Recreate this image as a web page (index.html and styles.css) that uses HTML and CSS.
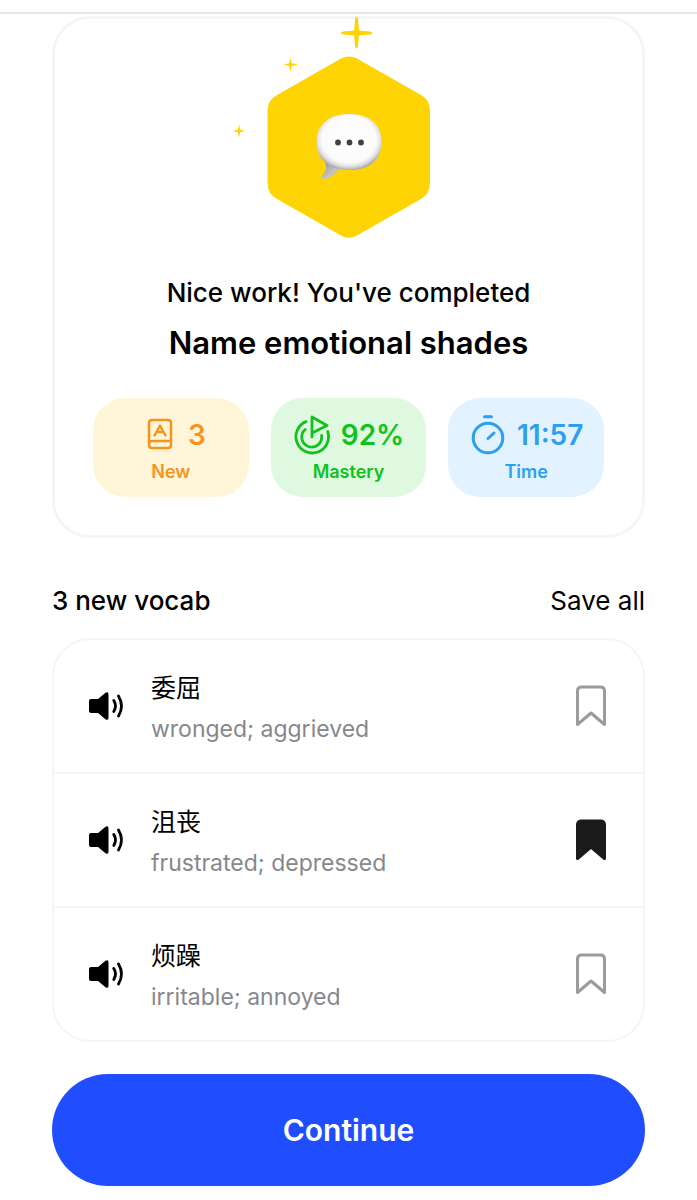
FILE: index.html
```html
<!DOCTYPE html>
<html lang="en">

<head>
    <meta charset="UTF-8">
    <meta name="viewport" content="width=device-width, initial-scale=1.0">
    <title>Lesson complete</title>
    <link rel="stylesheet" href="styles.css">
</head>

<body>
    <header class="top-bar"></header>
    <main class="page">
        <section class="summary">
            <!-- badge with sparkles -->
            <svg class="badge" viewBox="229 19 240 219" aria-hidden="true">
                <defs>
                    <radialGradient id="bubble" cx="50%" cy="45%" r="56%">
                        <stop offset="0" stop-color="#ffffff" />
                        <stop offset="0.75" stop-color="#fbfbfc" />
                        <stop offset="0.88" stop-color="#dedee0" />
                        <stop offset="1" stop-color="#a5a4a4" />
                    </radialGradient>
                    <linearGradient id="tail" x1="0" y1="0" x2="1" y2="1">
                        <stop offset="0" stop-color="#929292" />
                        <stop offset="0.6" stop-color="#c5c5c5" />
                        <stop offset="1" stop-color="#a0a0a0" />
                    </linearGradient>
                </defs>
                <path fill="#ffd404" d="M341 58.500Q349 54.500 357 58.500L421 95Q430 100 430 111V183Q430 194 421 199L357 235.500Q349 240 341 235.500L277 199Q267.500 194 267.500 183V111Q267.500 100 277 95Z" />
                <g fill="#ffd404">
                    <path d="M356.500 16.500Q358 16.500 358.200 22L359 30.500L367.500 31.300Q372.500 31.800 372.500 33Q372.500 34.200 367.500 34.700L359 35.500L358.200 44Q358 48.500 356.500 48.500Q355.100 48.500 354.900 44L354.100 35.500L345.500 34.700Q340.800 34.200 340.800 33Q340.800 31.800 345.500 31.300L354.100 30.500L354.900 22Q355.100 16.500 356.500 16.500Z" />
                    <path d="M290.500 57.500L291.900 63.200L298 64.500L291.900 65.900L290.500 72L289.200 65.900L283.500 64.500L289.200 63.200Z" />
                    <path d="M239 124.500L240.300 129.800L245.500 131L240.300 132.300L239 137.500L237.800 132.300L232.500 131L237.800 129.800Z" />
                </g>
                <path fill="url(#tail)" d="M325 162Q328 170 322 176Q321 179 325 179Q334 177 341 167Z" />
                <path fill="url(#bubble)" d="M349 114C369 114 381.500 124 381.500 142C381.500 160 369 170 350 170C329 170 316.500 160 316.500 142C316.500 124 330 114 349 114Z" />
                <g fill="#414141">
                    <circle cx="338" cy="142.500" r="2.900" />
                    <circle cx="349.500" cy="142.500" r="2.900" />
                    <circle cx="361" cy="142.500" r="2.900" />
                </g>
            </svg>
            <p class="praise">Nice work! You've completed</p>
            <h1 class="lesson-title">Name emotional shades</h1>
            <div class="stats">
                <div class="stat stat-new">
                    <div class="stat-top">
                        <svg class="stat-icon book" viewBox="0 0 28 40" fill="none" stroke="currentColor" stroke-width="2.500" stroke-linecap="round" stroke-linejoin="round" aria-hidden="true">
                            <path d="M6 5H22Q25 5 25 8V26H6Q3 26 3 29V8Q3 5 6 5ZM3 29V30Q3 33 6 33H22Q25 33 25 30V26" />
                            <path d="M8.500 20.500L14 10.500L19.500 20.500M10.700 17H17.300" />
                        </svg>
                        <span>3</span>
                    </div>
                    <div class="stat-label">New</div>
                </div>
                <div class="stat stat-mastery">
                    <div class="stat-top">
                        <svg class="stat-icon" viewBox="0 0 38 40" fill="none" stroke="currentColor" stroke-width="2.800" stroke-linecap="round" stroke-linejoin="round" aria-hidden="true">
                            <path d="M13 6.600A16.300 16.300 0 1 0 34.700 16.500" />
                            <path d="M12.200 14.500A10 10 0 1 0 28.600 20.500" />
                            <path d="M19 22V2L34 10.500L19 18" />
                        </svg>
                        <span>92%</span>
                    </div>
                    <div class="stat-label">Mastery</div>
                </div>
                <div class="stat stat-time">
                    <div class="stat-top">
                        <svg class="stat-icon" viewBox="0 0 38 40" fill="none" stroke="currentColor" stroke-width="3" stroke-linecap="round" aria-hidden="true">
                            <circle cx="19" cy="23" r="14.800" />
                            <path d="M15.500 1.800H22.500M19 23.500L25 18" />
                        </svg>
                        <span>11:57</span>
                    </div>
                    <div class="stat-label">Time</div>
                </div>
            </div>
        </section>

        <div class="vocab-header">
            <h2 class="vocab-title">3 new vocab</h2>
            <button class="save-all" type="button">Save all</button>
        </div>

        <ul class="vocab-list">
            <li class="vocab-item">
                <button class="icon-button" type="button" aria-label="Play 委屈">
                    <svg class="speaker" viewBox="0 0 36 30"><use href="#speaker" /></svg>
                </button>
                <div class="vocab-text">
                    <div class="word" lang="zh">委屈</div>
                    <div class="meaning">wronged; aggrieved</div>
                </div>
                <button class="icon-button bookmark" type="button" aria-label="Save 委屈">
                    <svg class="bookmark-icon" viewBox="0 0 32 42"><use href="#bookmark" /></svg>
                </button>
            </li>
            <li class="vocab-item">
                <button class="icon-button" type="button" aria-label="Play 沮丧">
                    <svg class="speaker" viewBox="0 0 36 30"><use href="#speaker" /></svg>
                </button>
                <div class="vocab-text">
                    <div class="word" lang="zh">沮丧</div>
                    <div class="meaning">frustrated; depressed</div>
                </div>
                <button class="icon-button bookmark saved" type="button" aria-label="Remove 沮丧" aria-pressed="true">
                    <svg class="bookmark-icon" viewBox="0 0 32 42"><use href="#bookmark" /></svg>
                </button>
            </li>
            <li class="vocab-item">
                <button class="icon-button" type="button" aria-label="Play 烦躁">
                    <svg class="speaker" viewBox="0 0 36 30"><use href="#speaker" /></svg>
                </button>
                <div class="vocab-text">
                    <div class="word" lang="zh">烦躁</div>
                    <div class="meaning">irritable; annoyed</div>
                </div>
                <button class="icon-button bookmark" type="button" aria-label="Save 烦躁">
                    <svg class="bookmark-icon" viewBox="0 0 32 42"><use href="#bookmark" /></svg>
                </button>
            </li>
        </ul>

        <button class="continue" type="button">Continue</button>
    </main>

    <!-- shared icons -->
    <svg class="sprite" width="0" height="0" aria-hidden="true">
        <symbol id="speaker" viewBox="0 0 36 30">
            <path fill="#000" d="M3 8H10L17.500 1.800Q20.500 0 20.500 3.500V26.500Q20.500 30 17.500 28.200L10 22H3Q1 22 1 20V10Q1 8 3 8Z" />
            <path fill="none" stroke="#000" stroke-width="2.800" stroke-linecap="round" d="M25.800 9.500Q29.200 15 25.800 20.500M30.500 5Q36.500 15 30.500 25" />
        </symbol>
        <symbol id="bookmark" viewBox="0 0 32 42">
            <path stroke-width="3" stroke-linejoin="round" d="M2.500 39.500V6Q2.500 2 6.500 2H25.500Q29.500 2 29.500 6V39.500L16 28Z" />
        </symbol>
    </svg>
</body>

</html>
```

FILE: styles.css
```css
* {
    box-sizing: border-box;
}

body {
    margin: 0;
    background-color: white;
    color: black;
    font-family: Inter, "Noto Sans CJK SC", sans-serif;
}

button {
    padding: 0;
    border: none;
    background: transparent;
    color: inherit;
    font-family: inherit;
    cursor: pointer;
}

.top-bar {
    height: 14px;
    border-bottom: 2px solid #e7e7e7;
}

.page {
    padding: 2px 52px 14px;
}

.summary {
    display: flex;
    flex-direction: column;
    align-items: center;
    padding: 0 38px 38px;
    border: 3px solid #f5f5f5;
    border-radius: 38px;
}

.badge {
    display: block;
    width: 240px;
    height: 219px;
    overflow: visible;
}

.praise {
    margin: 37px 0 0;
    font-size: 26px;
    font-weight: 500;
    line-height: 36px;
}

.lesson-title {
    margin: 11px 0 0;
    font-size: 31px;
    font-weight: 600;
    line-height: 42px;
}

.stats {
    display: grid;
    grid-template-columns: repeat(3, 1fr);
    gap: 22px;
    width: 100%;
    margin-top: 34px;
}

.stat {
    padding: 16px 0 12px;
    border-radius: 32px;
    text-align: center;
}

.stat-new {
    background-color: #fff6d9;
    color: #f7941d;
}

.stat-mastery {
    background-color: #dff8e0;
    color: #10c21c;
}

.stat-time {
    background-color: #e2f2fe;
    color: #2b9ff0;
}

.stat-top {
    display: flex;
    justify-content: center;
    align-items: center;
    gap: 10px;
    height: 42px;
    font-size: 28px;
    font-weight: 600;
}

.stat-icon {
    width: 38px;
    height: 40px;
}

.stat-icon.book {
    width: 28px;
    margin: 0 4px 0 10px;
}

.stat-label {
    margin-top: 2px;
    font-size: 18px;
    font-weight: 600;
    line-height: 27px;
}

.vocab-header {
    display: flex;
    justify-content: space-between;
    align-items: center;
    margin: 44px 0 19px;
    line-height: 37px;
}

.vocab-title {
    margin: 0;
    font-size: 26px;
    font-weight: 500;
}

.save-all {
    font-size: 26px;
    line-height: 37px;
}

.vocab-list {
    margin: 0;
    padding: 0;
    list-style: none;
    border: 2px solid #f5f5f5;
    border-radius: 38px;
}

.vocab-item {
    display: flex;
    align-items: center;
    padding: 23px 36px 23px 34px;
}

.vocab-item + .vocab-item {
    border-top: 2px solid #f5f5f5;
}

.icon-button {
    display: flex;
}

.speaker {
    width: 36px;
    height: 30px;
}

.vocab-text {
    flex: 1;
    padding-left: 27px;
}

.word {
    font-family: "Noto Sans CJK SC", sans-serif;
    font-size: 25px;
    line-height: 46px;
}

.meaning {
    color: #87878b;
    font-size: 23px;
    line-height: 40px;
}

.bookmark-icon {
    width: 32px;
    height: 42px;
    fill: none;
    stroke: #9b9b9b;
}

.saved .bookmark-icon {
    fill: #1b1b1b;
    stroke: #1b1b1b;
}

.continue {
    display: block;
    width: 100%;
    margin-top: 32px;
    padding: 36px;
    border-radius: 56px;
    background-color: #204eff;
    color: white;
    font-size: 30px;
    font-weight: 600;
    line-height: 40px;
}

.sprite {
    position: absolute;
}
```
